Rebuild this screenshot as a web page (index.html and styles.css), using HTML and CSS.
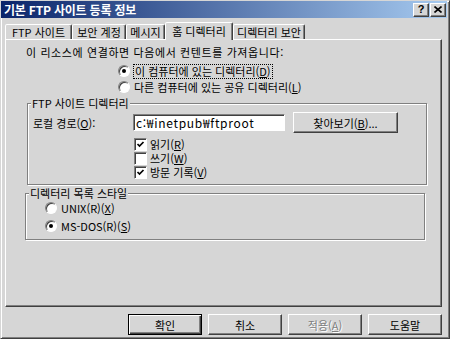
FILE: index.html
```html
<!DOCTYPE html>
<html lang="ko">
<head>
    <meta charset="UTF-8">
    <title>기본 FTP 사이트 등록 정보</title>
    <link rel="stylesheet" href="styles.css">
</head>
<body>
    <div class="window">
        <div class="titlebar">
            <span class="title">기본 FTP 사이트 등록 정보</span>
            <div class="title-buttons">
                <span class="title-btn">?</span>
                <span class="title-btn">
                    <svg width="8" height="7" viewBox="0 0 8 7"><path d="M0.5 0.5 L7.5 6.5 M7.5 0.5 L0.5 6.5" stroke="#000" stroke-width="1.6"/></svg>
                </span>
            </div>
        </div>

        <div class="tabs">
            <div class="tab t1">FTP 사이트</div>
            <div class="tab t2">보안 계정</div>
            <div class="tab t3">메시지</div>
            <div class="tab t4 selected">홈 디렉터리</div>
            <div class="tab t5">디렉터리 보안</div>
        </div>

        <div class="panel">
            <p class="intro">이 리소스에 연결하면 다음에서 컨텐트를 가져옵니다:</p>

            <div class="choices">
                <div class="opt"><span class="radio on"></span><span class="focus">이 컴퓨터에 있는 디렉터리(<u>D</u>)</span></div>
                <div class="opt"><span class="radio"></span><span>다른 컴퓨터에 있는 공유 디렉터리(<u>L</u>)</span></div>
            </div>

            <div class="group g1">
                <span class="group-title">FTP 사이트 디렉터리</span>
                <div class="path-row">
                    <span class="path-label">로컬 경로(<u>O</u>):</span>
                    <span class="textbox">c:₩inetpub₩ftproot</span>
                    <span class="button browse">찾아보기(<u>B</u>)...</span>
                </div>
                <div class="checks">
                    <div class="opt"><span class="check"><svg width="9" height="9" viewBox="0 0 9 9"><path d="M1.5 4 L3.5 6 L7.5 2" fill="none" stroke="#000" stroke-width="1.7"/></svg></span>읽기(<u>R</u>)</div>
                    <div class="opt"><span class="check"></span>쓰기(<u>W</u>)</div>
                    <div class="opt"><span class="check"><svg width="9" height="9" viewBox="0 0 9 9"><path d="M1.5 4 L3.5 6 L7.5 2" fill="none" stroke="#000" stroke-width="1.7"/></svg></span>방문 기록(<u>V</u>)</div>
                </div>
            </div>

            <div class="group g2">
                <span class="group-title">디렉터리 목록 스타일</span>
                <div class="styles">
                    <div class="opt"><span class="radio"></span><span>UNIX(R)(<u>X</u>)</span></div>
                    <div class="opt"><span class="radio on"></span><span>MS-DOS(R)(<u>S</u>)</span></div>
                </div>
            </div>
        </div>

        <div class="actions">
            <span class="button default">확인</span>
            <span class="button">취소</span>
            <span class="button disabled">적용(<u>A</u>)</span>
            <span class="button">도움말</span>
        </div>
    </div>
</body>
</html>
```

FILE: styles.css
```css
body {
    margin: 0;
    font-family: "Noto Sans CJK KR", "Noto Sans", sans-serif;
    font-size: 11px;
    line-height: 14px;
    color: #000;
    background: #d6d6d6;
}
.window {
    width: 450px;
    height: 339px;
    box-sizing: border-box;
    background: #d6d6d6;
    border: 1px solid;
    border-color: #d6d6d6 #404040 #404040 #d6d6d6;
    box-shadow: inset 1px 1px 0 #fff, inset -1px -1px 0 #808080;
    padding: 0 2px 2px 0;
}
.titlebar {
    height: 17px;
    display: flex;
    align-items: center;
    justify-content: space-between;
    background: linear-gradient(to right, #0a246a, #a6caf0);
}
.title {
    color: #fff;
    font-weight: bold;
    padding-left: 3px;
    font-size: 12px;
    letter-spacing: -0.2px;
}
.title-buttons {
    display: flex;
    gap: 1px;
    margin-right: 1px;
}
.title-btn {
    width: 14px;
    height: 12px;
    display: flex;
    align-items: center;
    justify-content: center;
    background: #d6d6d6;
    border: 1px solid;
    border-color: #fff #404040 #404040 #fff;
    box-shadow: inset -1px -1px 0 #808080;
    font-weight: bold;
    font-size: 11px;
    line-height: 1;
    font-family: "Liberation Sans", sans-serif;
}
.tabs {
    display: flex;
    align-items: flex-end;
    height: 17px;
    margin: 4px 0 0 4px;
    position: relative;
    z-index: 1;
}
.tab {
    height: 14px;
    line-height: 14px;
    text-align: center;
    border: 1px solid;
    border-bottom: none;
    border-color: #fff #404040 transparent #fff;
    box-shadow: inset -1px 0 0 #808080;
    border-radius: 2px 2px 0 0;
    background: #d6d6d6;
    white-space: nowrap;
}
.t1 { width: 65px; }
.t2 { width: 52px; }
.t3 { width: 37px; }
.t4 { width: 66px; }
.t5 { width: 70px; }
.tab.selected {
    height: 17px;
    line-height: 16px;
    margin-bottom: -1px;
}
.panel {
    width: 437px;
    height: 268px;
    margin-left: 4px;
    box-sizing: border-box;
    border: 1px solid;
    border-color: #fff #404040 #404040 #fff;
    box-shadow: inset -1px -1px 0 #808080;
    display: flex;
    flex-direction: column;
}
.intro {
    margin: 5px 0 0 20px;
    line-height: 14px;
    letter-spacing: 0.6px;
}
.opt {
    display: flex;
    align-items: center;
    height: 16px;
    line-height: 14px;
    white-space: nowrap;
}
.choices {
    margin: 4px 0 0 112px;
}
.radio {
    width: 10px;
    height: 10px;
    border: 1px solid;
    border-color: #808080 #fff #fff #808080;
    border-radius: 50%;
    background: #fff;
    box-shadow: inset 1px 1px 0 #404040;
    position: relative;
    margin-right: 4px;
    flex: none;
}
.radio.on::after {
    content: "";
    position: absolute;
    left: 3px;
    top: 3px;
    width: 4px;
    height: 4px;
    border-radius: 50%;
    background: #000;
}
.focus {
    outline: 1px dotted #000;
    outline-offset: 0;
    padding: 0 1px;
    line-height: 13px;
}
.group {
    position: relative;
    width: 400px;
    box-sizing: border-box;
    border: 1px solid #808080;
    box-shadow: 1px 1px 0 #fff, inset 1px 1px 0 #fff;
}
.g1 {
    margin: 8px 0 0 21px;
    height: 82px;
}
.g2 {
    margin: 8px 0 0 19px;
    height: 47px;
}
.group-title {
    position: absolute;
    top: -8px;
    left: 3px;
    padding: 0 1px;
    line-height: 14px;
    background: #d6d6d6;
    white-space: nowrap;
}
.path-row {
    display: flex;
    align-items: center;
    margin-top: 8px;
    height: 21px;
}
.path-label {
    width: 100px;
    margin-left: 5px;
}
.textbox {
    width: 148px;
    height: 15px;
    line-height: 15px;
    padding-left: 2px;
    font-size: 12px;
    letter-spacing: 0.7px;
    overflow: hidden;
    white-space: nowrap;
    background: #fff;
    border: 1px solid;
    border-color: #808080 #fff #fff #808080;
    box-shadow: inset 1px 1px 0 #404040;
}
.button {
    display: flex;
    align-items: center;
    justify-content: center;
    box-sizing: border-box;
    height: 21px;
    background: #d6d6d6;
    border: 1px solid;
    border-color: #fff #404040 #404040 #fff;
    box-shadow: inset -1px -1px 0 #808080;
    white-space: nowrap;
}
.browse {
    width: 105px;
    margin-left: 8px;
}
.checks {
    margin: 4px 0 0 106px;
}
.checks .opt {
    height: 14px;
}
.check {
    width: 9px;
    height: 9px;
    border: 1px solid;
    border-color: #808080 #fff #fff #808080;
    box-shadow: inset 1px 1px 0 #404040;
    background: #fff;
    padding: 1px;
    margin-right: 3px;
    display: flex;
    flex: none;
}
.styles {
    margin: 6px 0 0 19px;
    display: flex;
    flex-direction: column;
    gap: 2px;
}
.actions {
    display: flex;
    justify-content: flex-end;
    gap: 6px;
    margin: 7px 5px 0 0;
}
.actions .button {
    width: 74px;
}
.button.default {
    border: 1px solid #000;
    box-shadow: inset 1px 1px 0 #fff, inset -1px -1px 0 #404040, inset -2px -2px 0 #808080;
}
.button.disabled {
    color: #808080;
    text-shadow: 1px 1px 0 #fff;
}
```
